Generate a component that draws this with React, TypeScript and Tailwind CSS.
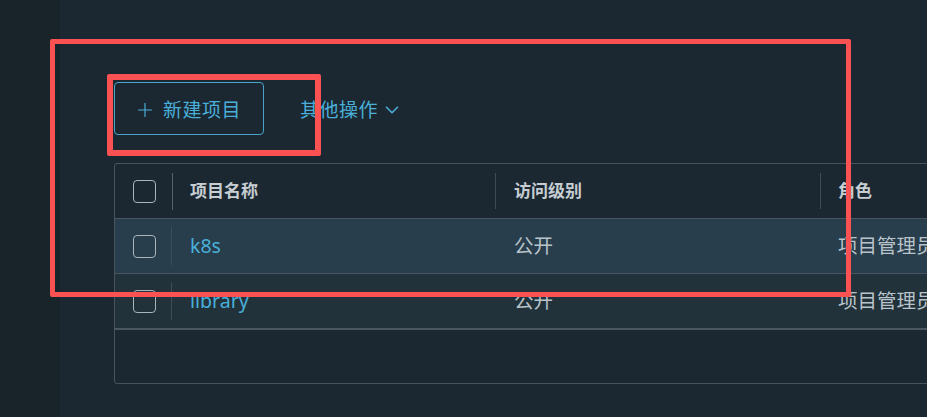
import { Plus, ChevronDown } from "lucide-react";

const rows = [
  { name: "k8s", access: "公开", role: "项目管理员", active: true },
  { name: "library", access: "公开", role: "项目管理员", active: false },
];

function Checkbox() {
  return <div className="w-[23px] h-[23px] rounded-[4px] border border-[#a9b4bb] shrink-0" />;
}

export default function App() {
  return (
    <div
      className="relative flex w-[927px] h-[417px] overflow-hidden bg-[#1c2831]"
      style={{ fontFamily: '"Noto Sans", "Noto Sans CJK SC", sans-serif' }}
    >
      {/* sidebar */}
      <div className="w-[60px] shrink-0 bg-[#19232a]" />

      {/* content */}
      <div className="flex-1 min-w-0 pl-[54px] pt-[82px]">
        <div className="flex items-center h-[53px]">
          <button className="flex items-center w-[150px] h-[53px] rounded-[4px] border border-[#4aa3cb] pl-[19px] pt-[3px] text-[#49afd9] text-[19px] tracking-[0.5px]">
            <Plus className="w-[22px] h-[22px] mr-[7px]" strokeWidth={1.3} />
            新建项目
          </button>
          <button className="flex items-center ml-[36px] pt-[3px] text-[#49afd9] text-[19px] tracking-[0.5px]">
            其他操作
            <ChevronDown className="w-[22px] h-[22px] ml-[3px]" strokeWidth={1.8} />
          </button>
        </div>

        {/* table */}
        <div className="mt-[28px] w-[1100px] border border-[#47535d] rounded-[3px] overflow-hidden">
          <div className="flex items-center h-[54px] text-[17px] font-bold text-[#c6ced3]">
            <div className="flex items-center w-[58px] pl-[18px] h-full">
              <Checkbox />
              <div className="ml-[16px] w-[1px] h-[37px] bg-[#55616b]" />
            </div>
            <div className="flex items-center w-[322px] pl-[17px] h-full">项目名称</div>
            <div className="flex items-center w-[325px] pl-[18px] h-[36px] border-l border-[#3f4b55]">访问级别</div>
            <div className="flex items-center pl-[17px] h-[36px] border-l border-[#3f4b55]">角色</div>
          </div>
          {rows.map((r) => (
            <div
              key={r.name}
              className={`flex items-center h-[55px] border-t border-[#485560] text-[19.5px] ${r.active ? "bg-[#283e4c]" : "bg-[#22323b]"}`}
            >
              <div className="flex items-center w-[58px] pl-[18px] h-full">
                <Checkbox />
                <div className="ml-[15px] w-[1px] h-[38px] bg-[#3f4d57]" />
              </div>
              <div className="w-[322px] pl-[17px] text-[#49afd9]">{r.name}</div>
              <div className="w-[325px] pl-[19px] text-[#b9c4ca]">{r.access}</div>
              <div className="pl-[18px] text-[#b9c4ca]">{r.role}</div>
            </div>
          ))}
          <div className="h-[55px] border-t-2 border-[#4a5762]" />
        </div>
      </div>

      {/* annotation boxes */}
      <div className="absolute left-[50px] top-[39px] w-[801px] h-[258px] border-[5px] border-[#fa5252] rounded-[2px]" />
      <div className="absolute left-[107px] top-[74px] w-[214px] h-[82px] border-[6px] border-[#fa5252] rounded-[2px]" />
    </div>
  );
}
